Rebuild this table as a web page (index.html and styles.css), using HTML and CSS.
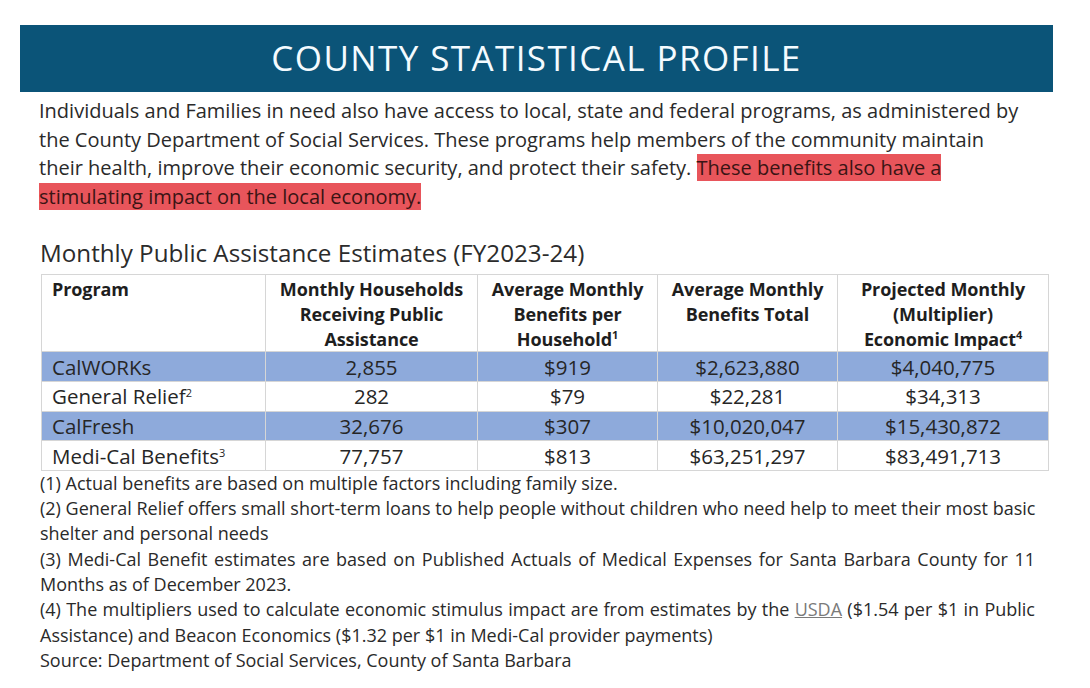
FILE: index.html
```html
<!DOCTYPE html>
<html>
<head>
<meta charset="utf-8">
<link rel="stylesheet" href="styles.css">
</head>
<body>
<div class="page">
  <div class="banner">COUNTY STATISTICAL PROFILE</div>
  <p class="intro">Individuals and Families in need also have access to local, state and federal programs, as administered by<br>the County Department of Social Services. These programs help members of the community maintain<br>their health, improve their economic security, and protect their safety. <span class="hl">These benefits also have a </span><br><span class="hl">stimulating impact on the local economy. </span></p>
  <h2 class="subtitle">Monthly Public Assistance Estimates (FY2023-24)</h2>
  <table class="stats">
    <colgroup>
      <col class="c1"><col class="c2"><col class="c3"><col class="c4"><col class="c5">
    </colgroup>
    <thead>
      <tr>
        <th class="left">Program</th>
        <th>Monthly Households<br>Receiving Public<br>Assistance</th>
        <th>Average Monthly<br>Benefits per<br>Household<sup>1</sup></th>
        <th>Average Monthly<br>Benefits Total</th>
        <th>Projected Monthly<br>(Multiplier)<br>Economic Impact<sup>4</sup></th>
      </tr>
    </thead>
    <tbody>
      <tr class="band"><td class="left">CalWORKs</td><td>2,855</td><td>$919</td><td>$2,623,880</td><td>$4,040,775</td></tr>
      <tr><td class="left">General Relief<sup>2</sup></td><td>282</td><td>$79</td><td>$22,281</td><td>$34,313</td></tr>
      <tr class="band"><td class="left">CalFresh</td><td>32,676</td><td>$307</td><td>$10,020,047</td><td>$15,430,872</td></tr>
      <tr><td class="left">Medi-Cal Benefits<sup>3</sup></td><td>77,757</td><td>$813</td><td>$63,251,297</td><td>$83,491,713</td></tr>
    </tbody>
  </table>
  <div class="notes">
    <p>(1) Actual benefits are based on multiple factors including family size.</p>
    <p class="nw">(2) General Relief offers small short-term loans to help people without children who need help to meet their most basic<br>shelter and personal needs</p>
    <p><span class="jl">(3) Medi-Cal Benefit estimates are based on Published Actuals of Medical Expenses for Santa Barbara County for 11</span>Months as of December 2023.</p>
    <p><span class="jl">(4) The multipliers used to calculate economic stimulus impact are from estimates by the <a class="link">USDA</a> ($1.54 per $1 in Public</span>Assistance) and Beacon Economics ($1.32 per $1 in Medi-Cal provider payments)</p>
    <p>Source: Department of Social Services, County of Santa Barbara</p>
  </div>
</div>
</body>
</html>
```
FILE: styles.css
```css
html, body {
  margin: 0;
  padding: 0;
  background: #ffffff;
}
body {
  font-family: "Open Sans", "Noto Sans", sans-serif;
  color: #262626;
}
.page {
  width: 1090px;
  height: 688px;
  padding-top: 25px;
  box-sizing: border-box;
  overflow: hidden;
}
.banner {
  margin-left: 20px;
  width: 1033px;
  height: 67px;
  background: #0b5478;
  color: #f4fbff;
  display: flex;
  align-items: center;
  justify-content: center;
  font-size: 35px;
  letter-spacing: 1.4px;
  padding-bottom: 2px;
  box-sizing: border-box;
}
.intro {
  margin: 5px 0 0 39px;
  font-size: 20px;
  line-height: 28.6px;
  color: #2a2a2a;
}
.hl {
  background: #e8555b;
  color: #3a1414;
}
.subtitle {
  margin: 26px 0 0 40px;
  font-weight: normal;
  font-size: 24.2px;
  line-height: 32px;
  color: #2b2b2b;
}
.stats {
  margin: 5px 0 0 41px;
  border-collapse: collapse;
  table-layout: fixed;
  width: 1007px;
  font-size: 20.5px;
  color: #262626;
}
.c1 { width: 224px; }
.c2 { width: 212px; }
.c3 { width: 180px; }
.c4 { width: 180px; }
.c5 { width: 211px; }
.stats th, .stats td {
  border: 1px solid #d6d6d6;
  text-align: center;
}
.stats th {
  font-weight: bold;
  font-size: 18px;
  line-height: 24.7px;
  letter-spacing: -0.1px;
  vertical-align: top;
  padding: 2px 4px 0;
  height: 74px;
  box-sizing: border-box;
  color: #1e1e1e;
}
.stats td {
  height: 28.6px;
  line-height: 24px;
  padding: 0 4px;
}
.stats .left {
  text-align: left;
  padding-left: 10px;
}
.stats sup {
  font-size: 11px;
  line-height: 0;
  vertical-align: 7px;
}
.band td {
  background: #8eaadb;
}
.notes {
  margin: 0 0 0 40px;
  width: 995px;
  font-size: 18px;
  line-height: 25.3px;
  color: #2a2a2a;
}
.notes p {
  margin: 0;
}
.notes .nw {
  white-space: nowrap;
}
.jl {
  display: block;
  text-align: justify;
  text-align-last: justify;
}
.link {
  color: #7a7a7a;
  text-decoration: underline;
}
```
